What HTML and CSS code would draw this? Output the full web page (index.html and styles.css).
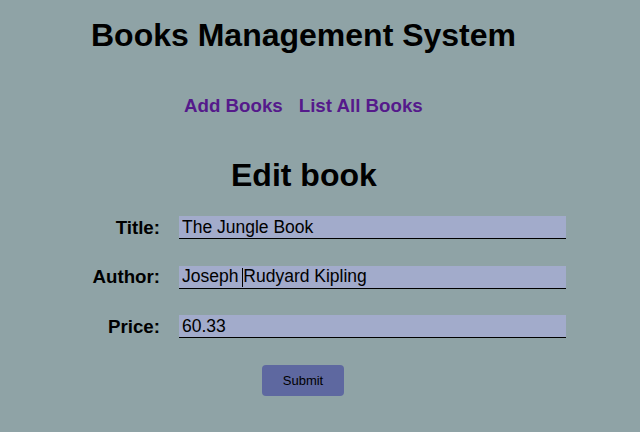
FILE: index.html
```html
<!DOCTYPE html>
<html>
<head>
<meta charset="utf-8">
<link rel="stylesheet" href="styles.css">
</head>
<body>
<div class="page">
  <h1 class="site-title">Books Management System</h1>
  <nav class="nav">
    <a class="nav-link" href="#">Add Books</a>
    <a class="nav-link" href="#">List All Books</a>
  </nav>
  <h2 class="form-title">Edit book</h2>
  <form class="form">
    <label class="label" for="title">Title:</label>
    <div class="field"><input class="input" id="title" value="The Jungle Book"></div>
    <label class="label" for="author">Author:</label>
    <div class="field"><input class="input" id="author" value="Joseph Rudyard Kipling"><span class="caret"></span></div>
    <label class="label" for="price">Price:</label>
    <div class="field"><input class="input" id="price" value="60.33"></div>
    <div class="actions"><button class="submit" type="button">Submit</button></div>
  </form>
</div>
</body>
</html>
```
FILE: styles.css
```css
html, body {
  margin: 0;
  padding: 0;
  background: #8fa3a6;
  font-family: "Liberation Sans", Arial, sans-serif;
  color: #000;
}
.page {
  width: 640px;
  height: 432px;
  box-sizing: border-box;
  padding-top: 17px;
}
.site-title {
  margin: 0 0 0 91px;
  font-size: 32px;
  line-height: 37px;
  font-weight: bold;
}
.nav {
  margin: 41px 0 0 184px;
  display: flex;
  gap: 16px;
}
.nav-link {
  color: #551a8b;
  font-size: 18.72px;
  font-weight: bold;
  text-decoration: none;
  line-height: 22px;
}
.form-title {
  margin: 40px 0 0 231px;
  font-size: 32px;
  line-height: 37px;
  font-weight: bold;
}
.form {
  margin-top: 22px;
  display: grid;
  grid-template-columns: 160px 387px;
  column-gap: 19px;
  row-gap: 26.5px;
  align-items: center;
}
.label {
  text-align: right;
  font-size: 18.72px;
  font-weight: bold;
}
.field {
  position: relative;
}
.input {
  display: block;
  width: 387px;
  height: 23px;
  box-sizing: border-box;
  margin: 0;
  padding: 0 3px;
  border: none;
  border-bottom: 1px solid #000;
  background: #a2abcb;
  font-family: "Liberation Sans", Arial, sans-serif;
  font-size: 17.5px;
  color: #000;
  outline: none;
}
.caret {
  position: absolute;
  left: 63px;
  top: 2px;
  width: 1px;
  height: 19px;
  background: #000;
}
.actions {
  grid-column: 1 / 3;
  padding-left: 262px;
}
.submit {
  width: 82px;
  height: 31px;
  border: none;
  border-radius: 4px;
  background: #5e68a0;
  color: #000;
  font-family: "Liberation Sans", Arial, sans-serif;
  font-size: 13px;
  padding: 0;
}
```
